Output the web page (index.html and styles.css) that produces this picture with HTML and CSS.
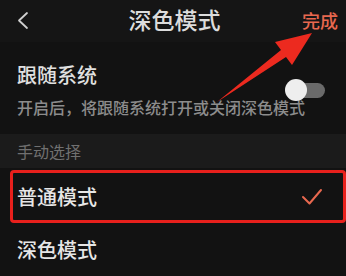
FILE: index.html
```html
<!DOCTYPE html>
<html lang="zh-CN">
<head>
    <meta charset="UTF-8">
    <meta name="viewport" content="width=device-width, initial-scale=1.0">
    <title>深色模式</title>
    <link rel="stylesheet" href="styles.css">
</head>
<body>
    <div class="page">
        <div class="header">
            <div class="back">
                <svg width="14" height="20" viewBox="0 0 14 20">
                    <polyline points="10,3 2,10.5 10,18" fill="none" stroke="#cfcfcf" stroke-width="1.8" stroke-linecap="round" stroke-linejoin="round"/>
                </svg>
            </div>
            <div class="title">深色模式</div>
            <div class="done">完成</div>
        </div>

        <div class="follow-row">
            <div class="follow-text">
                <div class="row-title">跟随系统</div>
                <div class="row-sub">开启后，将跟随系统打开或关闭深色模式</div>
            </div>
            <div class="toggle">
                <div class="knob"></div>
            </div>
        </div>

        <div class="section">手动选择</div>

        <div class="option selected">
            <span class="option-name">普通模式</span>
            <svg class="check" width="22" height="18" viewBox="0 0 22 18">
                <polyline points="2,9 8.5,15.5 20,2" fill="none" stroke="#e8684f" stroke-width="2" stroke-linecap="round" stroke-linejoin="round"/>
            </svg>
        </div>
        <div class="option">
            <span class="option-name">深色模式</span>
        </div>

        <!-- annotation arrow -->
        <svg class="arrow" width="346" height="276" viewBox="0 0 346 276">
            <polygon points="312,33 275,42 281,50 217,102 286,57 292,65" fill="#ec2a1f"/>
        </svg>
    </div>
</body>
</html>
```

FILE: styles.css
```css
body {
    margin: 0;
    background-color: #121212;
    font-family: "Noto Sans CJK SC", "Noto Sans", sans-serif;
}
.page {
    position: relative;
    width: 346px;
    height: 276px;
    overflow: hidden;
    background-color: #121212;
}
.header {
    height: 42px;
    display: grid;
    grid-template-columns: 1fr auto 1fr;
    align-items: center;
    padding: 0 8px 0 17px;
    background-color: #151515;
}
.back {
    display: flex;
    align-items: center;
    padding-bottom: 3px;
}
.title {
    font-size: 23px;
    line-height: 28px;
    font-weight: 500;
    color: #dcdcdc;
    padding: 0 0 4px 0;
    margin-left: -6px;
}
.done {
    justify-self: end;
    font-size: 18px;
    line-height: 22px;
    font-weight: 500;
    color: #e8684f;
    padding-bottom: 3px;
}
.follow-row {
    height: 92px;
    display: grid;
    align-items: center;
    padding: 0 21px 0 17px;
}
.follow-text,
.toggle {
    grid-area: 1 / 1;
}
.row-title {
    font-size: 20px;
    line-height: 24px;
    font-weight: 500;
    color: #e0e0e0;
    padding-top: 4px;
}
.row-sub {
    font-size: 16px;
    line-height: 20px;
    font-weight: 500;
    color: #8c8c8c;
    margin-top: 10px;
    white-space: nowrap;
}
.toggle {
    position: relative;
    justify-self: end;
    width: 38px;
    height: 15px;
    border-radius: 8px;
    background-color: #6a6a6a;
    margin-top: 4px;
}
.knob {
    position: absolute;
    left: -2px;
    top: -4px;
    width: 22px;
    height: 22px;
    border-radius: 50%;
    background-color: #eeeeee;
}
.section {
    height: 34px;
    line-height: 34px;
    padding-left: 17px;
    font-size: 16px;
    color: #707070;
    background-color: #1b1b1b;
}
.option {
    height: 53px;
    display: flex;
    align-items: center;
    justify-content: space-between;
    padding: 0 21px 0 17px;
    box-sizing: border-box;
}
.option-name {
    font-size: 20px;
    line-height: 24px;
    font-weight: 500;
    color: #e6e6e6;
}
.option.selected {
    margin: 2px 0 0 10px;
    padding: 0 20px 0 4px;
    border: 3px solid #e8201c;
    border-radius: 4px;
}
.option.selected .check {
    margin-top: 1px;
}
.arrow {
    position: absolute;
    left: 0;
    top: 0;
}
```
